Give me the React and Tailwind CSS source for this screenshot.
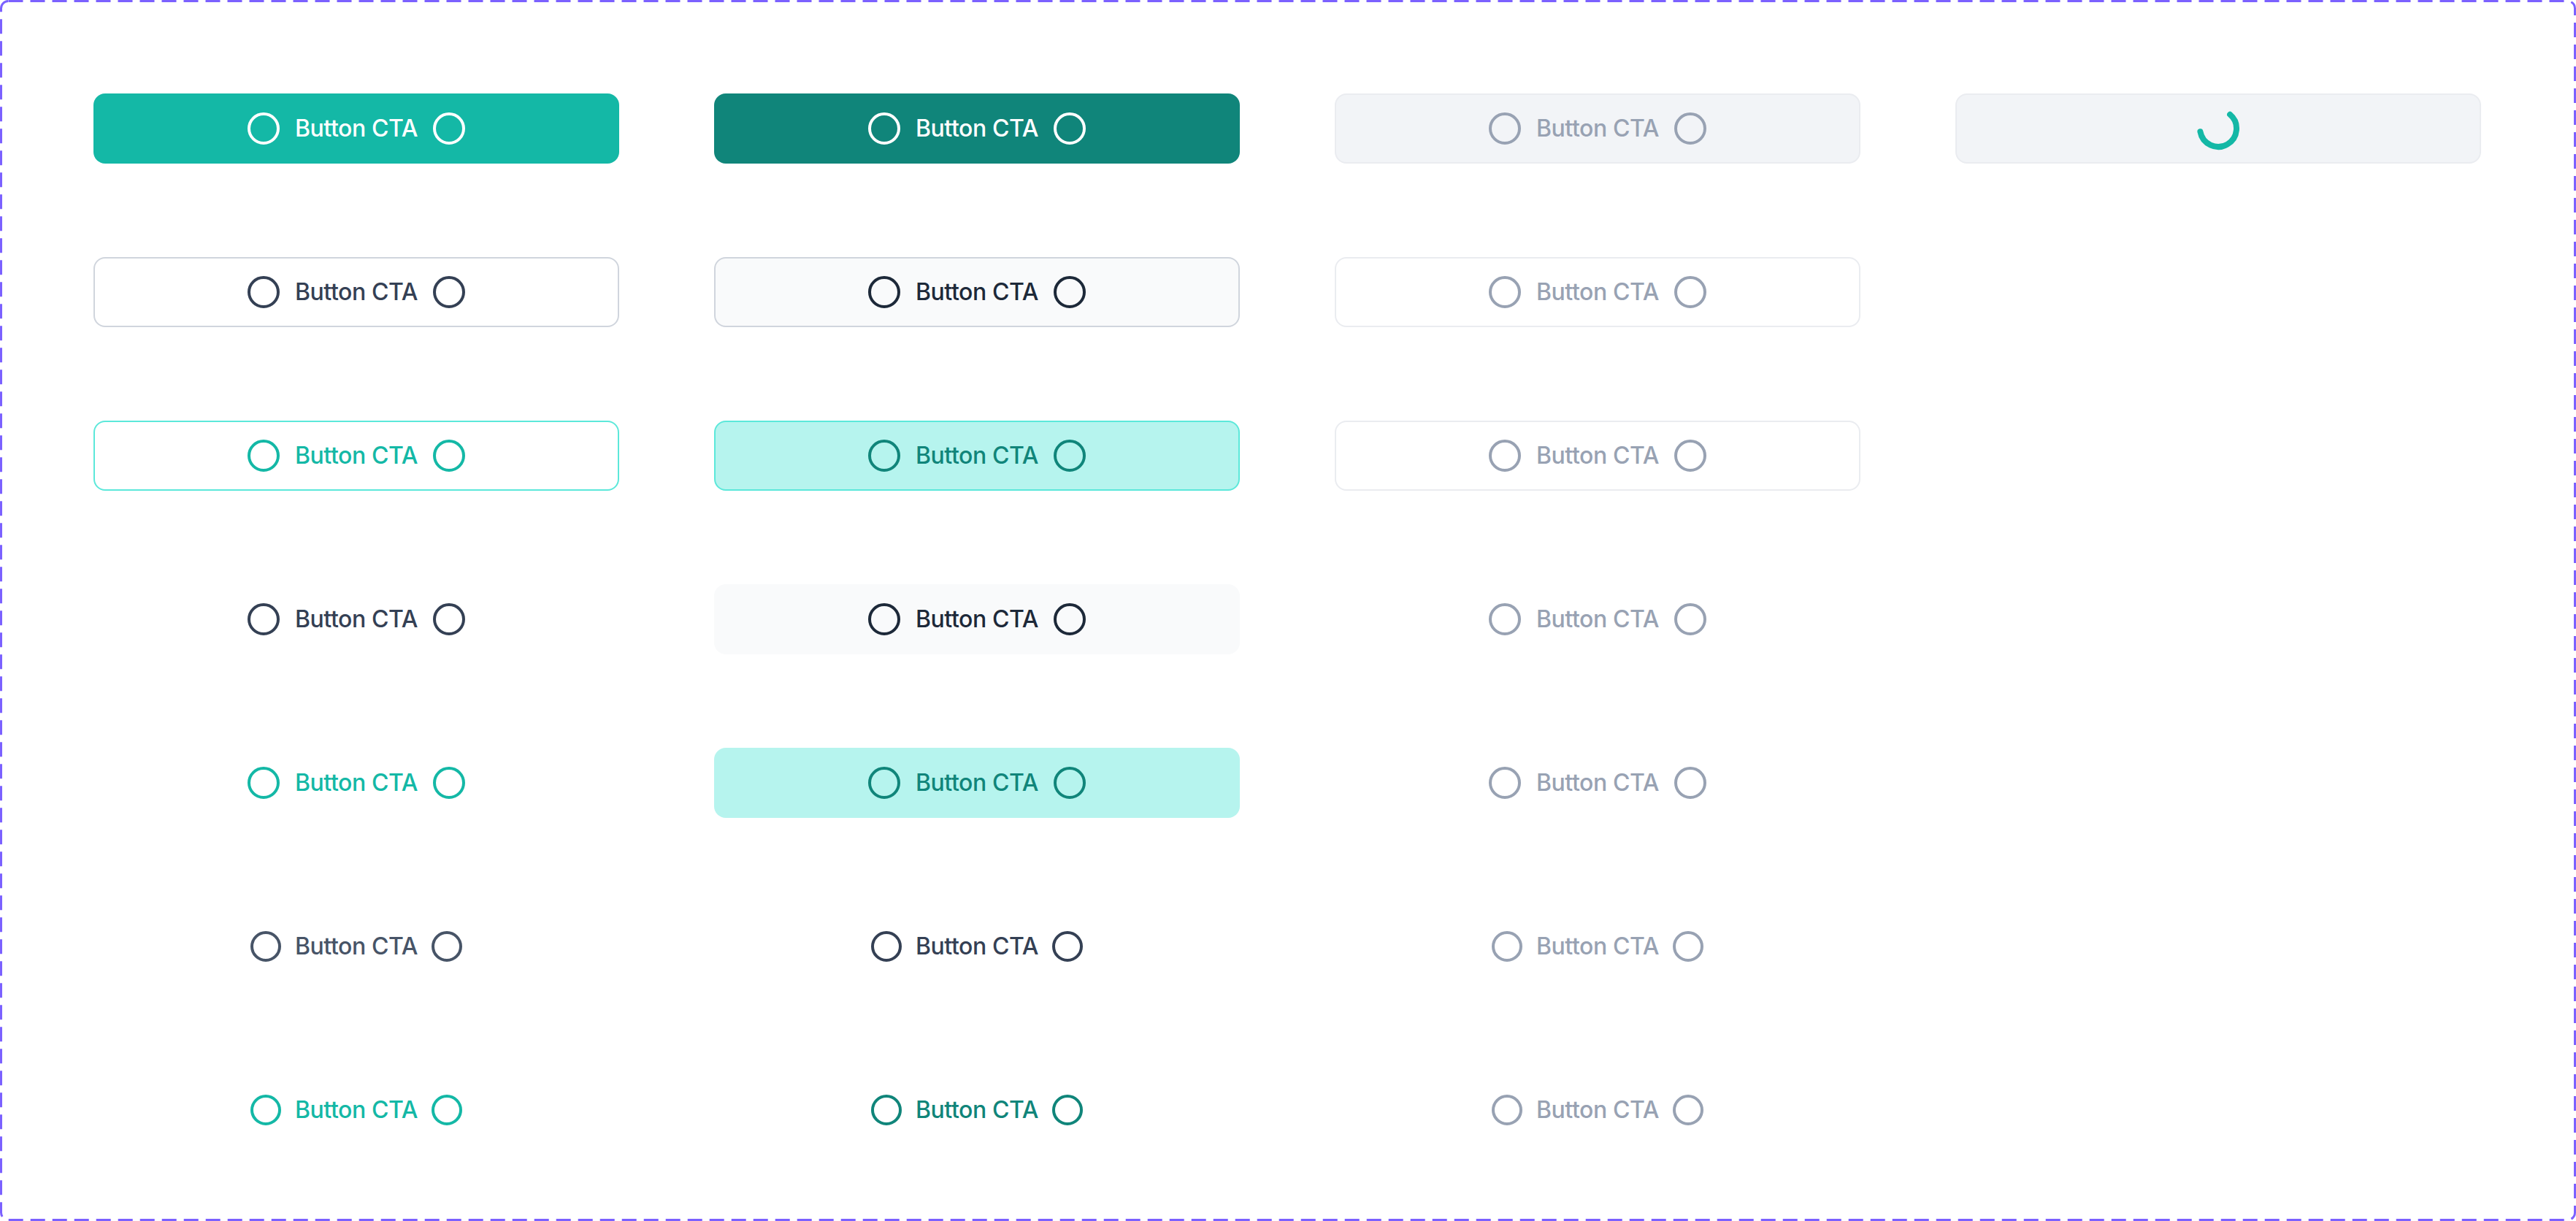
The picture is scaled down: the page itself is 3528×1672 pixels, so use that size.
import React from 'react';

const CircleIcon = ({ size = 44 }) => (
  <svg width={size} height={size} viewBox={`0 0 ${size} ${size}`} fill="none" className="shrink-0">
    <circle cx={size / 2} cy={size / 2} r={size / 2 - 2} stroke="currentColor" strokeWidth="4" />
  </svg>
);

const Spinner = () => (
  <svg width="64" height="64" viewBox="0 0 64 64" fill="none">
    <path
      d="M48.1 12.8 A25 25 0 1 1 7.4 36.3"
      stroke="#14B8A6"
      strokeWidth="8"
      strokeLinecap="round"
    />
  </svg>
);

// dashed frame drawn over the board, Figma component-set style
const DashedFrame = () => (
  <svg className="absolute inset-0 pointer-events-none" width="3528" height="1672" viewBox="0 0 3528 1672" fill="none">
    <rect x="1.5" y="1.5" width="3525" height="1669" rx="10" stroke="#7B61FF" strokeWidth="3" strokeDasharray="20 10" />
  </svg>
);

const Button = ({ className = '', link = false, loading = false }) => (
  <div className={`h-[96px] w-[720px] flex items-center justify-center rounded-[16px] ${link ? 'gap-[19px]' : 'gap-[21px]'} ${className}`}>
    {loading ? (
      <Spinner />
    ) : (
      <>
        <CircleIcon size={link ? 42 : 44} />
        <span className="text-[32px] leading-none font-medium tracking-[-0.4px]">Button CTA</span>
        <CircleIcon size={link ? 42 : 44} />
      </>
    )}
  </div>
);

const rows = [
  [
    { className: 'bg-[#14B8A6] text-white' },
    { className: 'bg-[#10857A] text-white' },
    { className: 'bg-[#F2F4F7] border-2 border-[#EAECF0] text-[#98A2B3]' },
    { className: 'bg-[#F2F4F7] border-2 border-[#EAECF0]', loading: true },
  ],
  [
    { className: 'bg-white border-2 border-[#D0D5DD] text-[#344054]' },
    { className: 'bg-[#F9FAFB] border-2 border-[#D0D5DD] text-[#1D2939]' },
    { className: 'bg-white border-2 border-[#EAECF0] text-[#98A2B3]' },
  ],
  [
    { className: 'bg-white border-2 border-[#5CE8DA] text-[#14B8A6]' },
    { className: 'bg-[#B6F4EE] border-2 border-[#5CE8DA] text-[#10857A]' },
    { className: 'bg-white border-2 border-[#EAECF0] text-[#98A2B3]' },
  ],
  [
    { className: 'text-[#344054]' },
    { className: 'bg-[#F9FAFB] text-[#1D2939]' },
    { className: 'text-[#98A2B3]' },
  ],
  [
    { className: 'text-[#14B8A6]' },
    { className: 'bg-[#B6F4EE] text-[#10857A]' },
    { className: 'text-[#98A2B3]' },
  ],
  [
    { className: 'text-[#475467]', link: true },
    { className: 'text-[#344054]', link: true },
    { className: 'text-[#98A2B3]', link: true },
  ],
  [
    { className: 'text-[#14B8A6]', link: true },
    { className: 'text-[#10857A]', link: true },
    { className: 'text-[#98A2B3]', link: true },
  ],
];

export default function App() {
  return (
    <div className="relative w-[3528px] h-[1672px] bg-white" style={{ fontFamily: 'Inter, "Noto Sans", sans-serif' }}>
      <div className="w-full h-full pt-[128px] pl-[128px]">
        <div className="grid grid-cols-[repeat(4,720px)] gap-x-[130px] gap-y-[128px]">
          {rows.map((row, i) =>
            [0, 1, 2, 3].map((j) =>
              row[j] ? (
                <Button key={`${i}-${j}`} {...row[j]} />
              ) : (
                <div key={`${i}-${j}`} className="h-[96px]" />
              )
            )
          )}
        </div>
      </div>
      <DashedFrame />
    </div>
  );
}
